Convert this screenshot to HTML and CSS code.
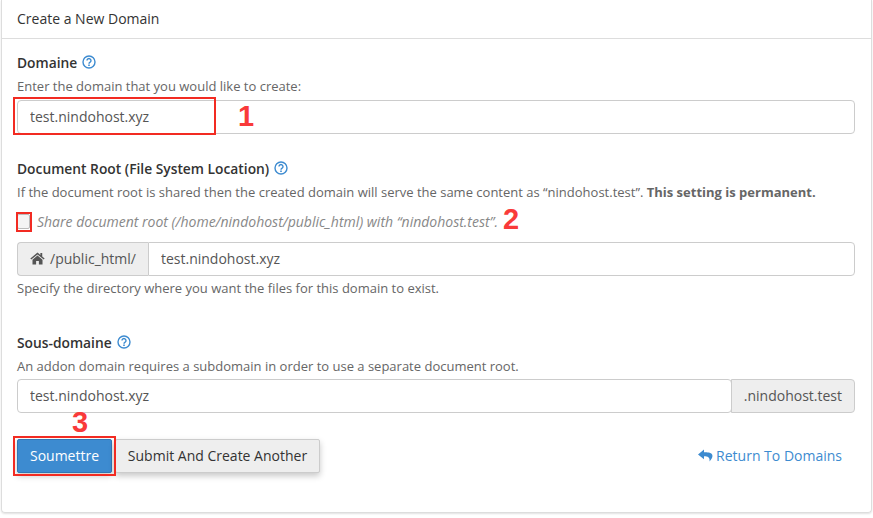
FILE: index.html
```html
<!DOCTYPE html>
<html lang="en">
  <head>
    <meta charset="UTF-8" />
    <meta name="viewport" content="width=device-width, initial-scale=1.0" />
    <title>Create a New Domain</title>
    <link rel="stylesheet" href="styles.css">
  </head>

  <body>
    <svg class="icon-defs" width="0" height="0" aria-hidden="true">
      <symbol id="help" viewBox="0 0 14 14">
        <circle cx="7" cy="7" r="6" fill="none" stroke="currentColor" stroke-width="1.4" />
        <path d="M5 5.6a2 2 0 1 1 3.1 1.6c-.8.5-1.1.8-1.1 1.6" fill="none" stroke="currentColor" stroke-width="1.4" />
        <rect x="6.2" y="9.5" width="1.6" height="1.5" fill="currentColor" />
      </symbol>
    </svg>

    <div class="panel">
      <div class="panel-heading">Create a New Domain</div>

      <form class="panel-body">
        <!-- Domaine -->
        <div class="field field-domain">
          <label class="field-label">Domaine <svg class="help"><use href="#help" /></svg></label>
          <p class="field-desc">Enter the domain that you would like to create:</p>
          <div class="annotated">
            <input class="text-input" type="text" value="test.nindohost.xyz" />
            <span class="mark mark-domain"></span>
            <span class="num num-1">1</span>
          </div>
        </div>

        <!-- Document root -->
        <div class="field field-root">
          <label class="field-label">Document Root (File System Location) <svg class="help"><use href="#help" /></svg></label>
          <p class="field-desc">If the document root is shared then the created domain will serve the same content as “nindohost.test”. <strong>This setting is permanent.</strong></p>
          <div class="share-row">
            <span class="checkbox"></span>
            <em class="share-text">Share document root (/home/nindohost/public_html) with “nindohost.test”.</em>
            <span class="mark mark-check"></span>
            <span class="num num-2">2</span>
          </div>
          <div class="input-group">
            <span class="addon addon-left">
              <svg class="home" viewBox="0 0 16 14" aria-hidden="true"><path d="M8 0.6 0.3 7l1 1.2L8 2.6l6.7 5.6 1-1.2-2.6-2.2V1.2h-2v2L8 .6zM8 3.8 2.6 8.3v5.1h3.9V9.6h3v3.8h3.9V8.3L8 3.8z" /></svg>
              /public_html/
            </span>
            <input class="text-input" type="text" value="test.nindohost.xyz" />
          </div>
          <p class="field-help">Specify the directory where you want the files for this domain to exist.</p>
        </div>

        <!-- Sous-domaine -->
        <div class="field field-sub">
          <label class="field-label">Sous-domaine <svg class="help"><use href="#help" /></svg></label>
          <p class="field-desc">An addon domain requires a subdomain in order to use a separate document root.</p>
          <div class="input-group">
            <input class="text-input" type="text" value="test.nindohost.xyz" />
            <span class="addon addon-right">.nindohost.test</span>
          </div>
        </div>

        <!-- Boutons -->
        <div class="actions">
          <button class="btn btn-primary" type="button">Soumettre</button>
          <button class="btn btn-default" type="button">Submit And Create Another</button>
          <a class="back-link" href="#">
            <svg class="reply" viewBox="0 0 14 12" aria-hidden="true"><path d="M5.6.4 0 5l5.6 4.6V6.8c3.6 0 5.6.8 5.2 4.8 2.2-2.4 3-4.2 2.6-6C13 3.4 10 2.8 5.6 2.9V.4z" /></svg>
            Return To Domains
          </a>
          <span class="mark mark-submit"></span>
          <span class="num num-3">3</span>
        </div>
      </form>
    </div>
  </body>
</html>
```

FILE: styles.css
```css
/* Page */
body {
  margin: 0;
  padding: 0 1px 4px 1px;
  background-color: #fff;
  font-family: "Open Sans", sans-serif;
  font-size: 13px;
  color: #333;
}

.icon-defs {
  position: absolute;
}

/* Panel */
.panel {
  height: 513px;
  box-sizing: border-box;
  border: 1px solid #ddd;
  border-top: 0;
  border-radius: 0 0 4px 4px;
  box-shadow: 0 1px 2px rgba(0, 0, 0, 0.12);
}

.panel-heading {
  height: 39px;
  box-sizing: border-box;
  padding-left: 15px;
  border-bottom: 1px solid #ddd;
  font-size: 14px;
  line-height: 38px;
  color: #333;
}

.panel-body {
  padding: 13px 16px 0 15px;
}

/* Fields */
.field-label {
  display: flex;
  align-items: center;
  gap: 5px;
  height: 20px;
  font-size: 13.8px;
  font-weight: 600;
  color: #333;
}

.help {
  width: 14px;
  height: 14px;
  color: #3d8bd0;
}

.field-desc,
.field-help {
  margin: 0;
  line-height: 17px;
  color: #666;
}

.field-desc {
  margin-top: 6px;
  margin-bottom: 5px;
}

.field-help {
  margin-top: 4px;
}

.field-root {
  margin-top: 24px;
}

.field-sub {
  margin-top: 35px;
}

.field-sub .field-desc {
  margin-bottom: 4px;
}

.annotated {
  position: relative;
}

.text-input {
  display: block;
  width: 100%;
  height: 34px;
  box-sizing: border-box;
  padding: 0 12px 1px;
  border: 1px solid #ccc;
  border-radius: 4px;
  font-family: inherit;
  font-size: 14px;
  color: #555;
  background-color: #fff;
}

/* Share document root */
.share-row {
  position: relative;
  display: flex;
  align-items: center;
  gap: 7px;
  height: 20px;
  margin-top: 10px;
  margin-bottom: 11px;
}

.checkbox {
  width: 13px;
  height: 15px;
  box-sizing: border-box;
  border: 1px solid #bbb;
  border-radius: 2px;
  background-color: #f4f4f4;
}

.share-text {
  font-size: 14px;
  color: #888;
}

/* Input groups */
.input-group {
  display: flex;
}

.input-group .text-input {
  flex: 1;
  min-width: 0;
}

.addon {
  display: flex;
  align-items: center;
  flex: none;
  box-sizing: border-box;
  height: 34px;
  padding: 0 12px 1px;
  border: 1px solid #ccc;
  background-color: #eee;
  font-size: 14px;
  color: #555;
}

.addon-left {
  gap: 5px;
  border-right: 0;
  border-radius: 4px 0 0 4px;
}

.addon-left + .text-input {
  border-radius: 0 4px 4px 0;
}

.addon-right {
  border-left: 1px solid #ccc;
  margin-left: -1px;
  border-radius: 0 4px 4px 0;
}

.home {
  width: 15px;
  height: 13px;
  fill: #555;
}

/* Buttons */
.actions {
  position: relative;
  display: flex;
  align-items: center;
  margin-top: 26px;
}

.btn {
  height: 34px;
  box-sizing: border-box;
  padding: 0 4px 1px;
  border: 1px solid #ccc;
  border-radius: 2px;
  font-family: inherit;
  font-size: 14px;
  white-space: nowrap;
  box-shadow: 0 3px 6px rgba(0, 0, 0, 0.22);
}

.btn-primary {
  width: 95px;
  border-color: #2f77b5;
  background-color: #3d8bd0;
  color: #fff;
}

.btn-default {
  width: 205px;
  margin-left: 3px;
  background-color: #eee;
  color: #333;
}

.back-link {
  display: flex;
  align-items: center;
  gap: 3px;
  margin-left: auto;
  margin-right: 13px;
  margin-bottom: 2px;
  font-size: 14px;
  color: #3d8bd0;
  text-decoration: none;
}

.reply {
  width: 15px;
  height: 13px;
  fill: #3d8bd0;
}

/* Annotations */
.mark {
  position: absolute;
  box-sizing: border-box;
  border: 2px solid #f22b22;
}

.mark-domain {
  left: -4px;
  top: -3px;
  width: 203px;
  height: 38px;
}

.mark-check {
  left: -1px;
  top: 1px;
  width: 16px;
  height: 20px;
}

.mark-submit {
  left: -4px;
  top: -3px;
  width: 103px;
  height: 40px;
}

.num {
  position: absolute;
  font-family: "Liberation Sans", sans-serif;
  font-size: 29px;
  font-weight: 700;
  line-height: 30px;
  color: #f93a3a;
}

.num-1 {
  left: 221px;
  top: 1px;
}

.num-2 {
  left: 486px;
  top: -7px;
}

.num-3 {
  left: 55px;
  top: -32px;
}
```
